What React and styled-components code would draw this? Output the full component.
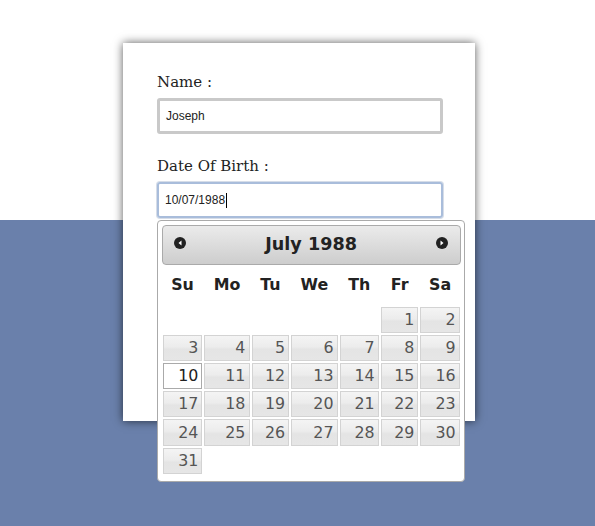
import styled, { createGlobalStyle } from "styled-components";

const GlobalStyle = createGlobalStyle`
  body {
    margin: 0;
    background: #6a80ab;
  }
`;

const Page = styled.div`
  min-height: 526px;
  box-sizing: border-box;
  padding: 43px 0 0 123px;
  background: linear-gradient(to bottom, #ffffff 0, #ffffff 220px, #6a80ab 220px);
`;

const Card = styled.div`
  position: relative;
  width: 352px;
  height: 378px;
  box-sizing: border-box;
  padding: 29px 34px 0;
  background: #ffffff;
  box-shadow: 0 0 9px rgba(0, 0, 0, 0.65);
`;

const FieldGroup = styled.div`
  & + & {
    margin-top: 22px;
  }
`;

const Label = styled.label`
  display: block;
  margin-bottom: 6px;
  font-family: "DejaVu Serif", "Liberation Serif", serif;
  font-size: 15px;
  line-height: 20px;
  color: #222;
`;

const TextBox = styled.div`
  display: flex;
  align-items: center;
  width: 286px;
  height: 36px;
  box-sizing: border-box;
  padding: 0 6px;
  border: ${(props) => (props.$focused ? "2px solid #a9bddb" : "3px solid #c9c9c9")};
  border-radius: 3px;
  box-shadow: ${(props) => (props.$focused ? "0 0 0 1px #d6dde8" : "none")};
  font-family: "Liberation Sans", Arial, sans-serif;
  font-size: 12px;
  color: #222;
`;

const Caret = styled.span`
  display: inline-block;
  width: 1px;
  height: 15px;
  margin-left: 1px;
  background: #000;
`;

const Picker = styled.div`
  position: absolute;
  left: 34px;
  top: 177px;
  width: 17em;
  padding: 0.2em 0.2em 0;
  font-family: "DejaVu Sans", Verdana, sans-serif;
  font-size: 17.6px;
  color: #222;
  background: #ffffff;
  border: 1px solid #aaaaaa;
  border-radius: 4px;
`;

const Header = styled.div`
  position: relative;
  padding: 0.2em 0;
  border: 1px solid #aaaaaa;
  border-radius: 4px;
  background: linear-gradient(to bottom, #ebebeb 0%, #dcdcdc 50%, #cdcdcd 100%);
  font-weight: bold;
  color: #222;
`;

const Title = styled.div`
  margin: 0 2.3em;
  line-height: 1.8em;
  text-align: center;
`;

const NavButton = styled.span`
  position: absolute;
  top: 2px;
  ${(props) => (props.$side === "next" ? "right: 2px;" : "left: 2px;")}
  width: 1.8em;
  height: 1.8em;
  display: flex;
  align-items: center;
  justify-content: center;
`;

const Table = styled.table`
  width: 100%;
  font-size: 0.9em;
  border-collapse: collapse;
  margin: 0 0 0.4em;
`;

const Th = styled.th`
  padding: 0.7em 0.3em;
  line-height: 18.6px;
  text-align: center;
  font-weight: bold;
  border: 0;
`;

const Td = styled.td`
  padding: 1px;
  border: 0;
`;

const Day = styled.span`
  display: block;
  padding: 0.2em;
  line-height: 17.8px;
  text-align: right;
  border: 1px solid ${(props) => (props.$active ? "#aaaaaa" : "#d3d3d3")};
  background: ${(props) =>
    props.$active
      ? "#ffffff"
      : "linear-gradient(to bottom, #f4f4f4 0%, #ececec 45%, #e4e4e4 55%, #e6e6e6 100%)"};
  color: ${(props) => (props.$active ? "#212121" : "#555555")};
`;

function NavIcon({ dir }) {
  const points = dir === "prev" ? "7.5,3.5 4.5,6 7.5,8.5" : "4.5,3.5 7.5,6 4.5,8.5";
  return (
    <svg width="12" height="12" viewBox="0 0 12 12">
      <circle cx="6" cy="6" r="6" fill="#222" />
      <polygon points={points} fill="#fff" />
    </svg>
  );
}

const dayNames = ["Su", "Mo", "Tu", "We", "Th", "Fr", "Sa"];

const weeks = [
  [null, null, null, null, null, 1, 2],
  [3, 4, 5, 6, 7, 8, 9],
  [10, 11, 12, 13, 14, 15, 16],
  [17, 18, 19, 20, 21, 22, 23],
  [24, 25, 26, 27, 28, 29, 30],
  [31, null, null, null, null, null, null],
];

export default function App() {
  const selected = 10;

  return (
    <>
      <GlobalStyle />
      <Page>
        <Card>
          <FieldGroup>
            <Label>Name :</Label>
            <TextBox>Joseph</TextBox>
          </FieldGroup>
          <FieldGroup>
            <Label>Date Of Birth :</Label>
            <TextBox $focused>
              10/07/1988
              <Caret />
            </TextBox>
          </FieldGroup>

          <Picker>
            <Header>
              <NavButton $side="prev">
                <NavIcon dir="prev" />
              </NavButton>
              <NavButton $side="next">
                <NavIcon dir="next" />
              </NavButton>
              <Title>July 1988</Title>
            </Header>
            <Table>
              <thead>
                <tr>
                  {dayNames.map((d) => (
                    <Th key={d}>{d}</Th>
                  ))}
                </tr>
              </thead>
              <tbody>
                {weeks.map((week, i) => (
                  <tr key={i}>
                    {week.map((day, j) => (
                      <Td key={j}>
                        {day && <Day $active={day === selected}>{day}</Day>}
                      </Td>
                    ))}
                  </tr>
                ))}
              </tbody>
            </Table>
          </Picker>
        </Card>
      </Page>
    </>
  );
}
